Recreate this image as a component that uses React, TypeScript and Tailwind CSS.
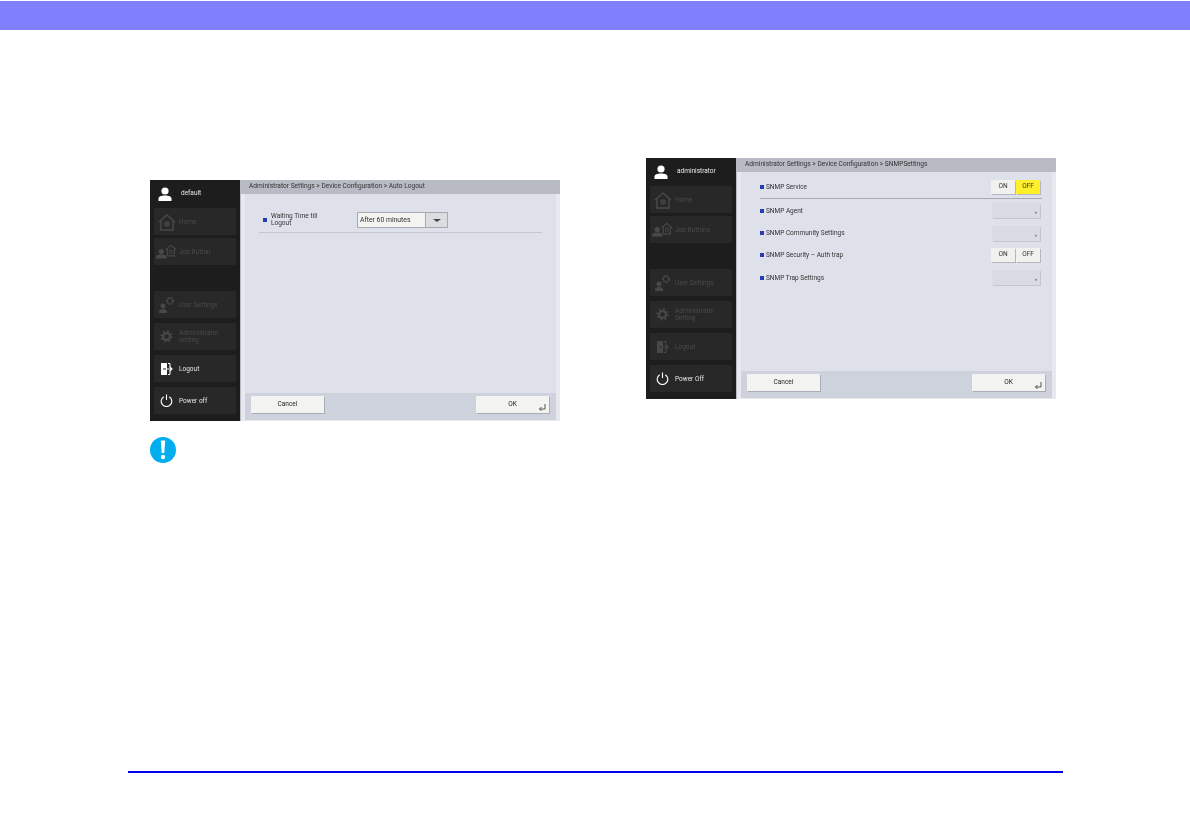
import type { ReactNode } from "react";

const FONT = "font-['Roboto','Liberation_Sans',sans-serif]";

function UserIcon() {
  return (
    <svg viewBox="0 0 16 14" className="h-[14px] w-[16px]" fill="#fff">
      <circle cx="8" cy="4" r="3.6" />
      <path d="M1.5 14v-2.6c0-1.7 2.4-3 6.5-3s6.5 1.300 6.500 3V14z" />
    </svg>
  );
}

function HomeIcon() {
  return (
    <svg viewBox="0 0 18 18" className="h-[18px] w-[18px]" fill="none" stroke="#484848" strokeWidth="1.6">
      <path d="M1 9 9 2l8 7" />
      <path d="M3 8v9h12V8" />
      <path d="M7 9h4v4H7zM7 11h4M9 9v4" strokeWidth="1" />
    </svg>
  );
}

function JobIcon() {
  return (
    <svg viewBox="0 0 24 16" className="h-[17px] w-[21px]" fill="none">
      <circle cx="6" cy="8" r="3" fill="#484848" />
      <path d="M0 16v-2c0-1.500 2.500-2.500 6-2.500s6 1 6 2.500v2z" fill="#484848" />
      <path d="M11 6l6-5 6 5M13 5.500V13h8V5.500" stroke="#484848" strokeWidth="1.300" />
      <path d="M15.500 6.500h3v3.500h-3z" stroke="#484848" />
    </svg>
  );
}

function UserGearIcon() {
  return (
    <svg viewBox="0 0 18 18" className="h-[18px] w-[18px]">
      <circle cx="12" cy="5" r="3" fill="none" stroke="#484848" strokeWidth="2" strokeDasharray="2 0.8" />
      <circle cx="5" cy="10" r="2.500" fill="#484848" />
      <path d="M1 17v-1.500c0-1.500 1.500-2.500 4-2.500s4 1 4 2.500V17z" fill="#484848" />
    </svg>
  );
}

function GearIcon() {
  return (
    <svg viewBox="0 0 14 14" className="h-[13px] w-[13px]">
      <circle cx="7" cy="7" r="3.700" fill="none" stroke="#484848" strokeWidth="2.400" />
      <circle cx="7" cy="7" r="5.800" fill="none" stroke="#484848" strokeWidth="1.800" strokeDasharray="2 2.550" />
    </svg>
  );
}

function LogoutIcon({ color }: { color: string }) {
  return (
    <svg viewBox="0 0 14 14" className="h-[14px] w-[14px]">
      <path d="M1 1h6v12H1z" fill={color} />
      <path d="M8 1.500h2V5M8 12.500h2V9" fill="none" stroke={color} />
      <path d="M5 7h6M9.500 4.800 12 7l-2.500 2.200" fill="none" stroke={color} strokeWidth="1.200" />
      <path d="M3 7h3" stroke="#282828" strokeWidth="1" />
    </svg>
  );
}

function PowerIcon() {
  return (
    <svg viewBox="0 0 14 14" className="h-[13px] w-[13px]" fill="none" stroke="#fff" strokeWidth="1.200">
      <path d="M4 3a5.700 5.700 0 1 0 6 0" />
      <path d="M7 0.500v6" />
    </svg>
  );
}

function Tile({
  icon,
  label,
  active = false,
  className = "",
}: {
  icon: ReactNode;
  label: ReactNode;
  active?: boolean;
  className?: string;
}) {
  return (
    <div className={`flex h-[27px] items-center rounded-[1px] bg-[#282828] ${className}`}>
      <span className="flex w-[25px] shrink-0 justify-center">{icon}</span>
      <span className={`pt-[1px] text-[6.500px] leading-[7px] ${active ? "text-[#e4e4e4]" : "text-[#4a4a4a]"}`}>{label}</span>
    </div>
  );
}

function Sidebar({ user, job, admin, power, logoutActive }: { user: string; job: string; admin: string; power: string; logoutActive: boolean }) {
  return (
    <div className="flex w-[90px] shrink-0 flex-col bg-[#1d1d1d] px-[4px]">
      <div className="flex h-[27px] items-center">
        <span className="ml-[3px] flex w-[24px] shrink-0"><UserIcon /></span>
        <span className="pt-[1px] text-[6.500px] text-[#e8e8e8]">{user}</span>
      </div>
      <Tile icon={<HomeIcon />} label="Home" className="mt-[1px]" />
      <Tile icon={<JobIcon />} label={job} className="mt-[3px]" />
      <Tile icon={<UserGearIcon />} label="User Settings" className="mt-[26px]" />
      <Tile icon={<GearIcon />} label={<>Administrator<br />{admin}</>} className="mt-[5px]" />
      <Tile icon={<LogoutIcon color={logoutActive ? "#fff" : "#484848"} />} label="Logout" active={logoutActive} className="mt-[5px]" />
      <Tile icon={<PowerIcon />} label={power} active className="mt-[5px]" />
    </div>
  );
}

function Bullet() {
  return <span className="h-[4px] w-[4px] shrink-0 bg-[#2a3cb4]" />;
}

function FooterButton({ children, enter = false }: { children: string; enter?: boolean }) {
  return (
    <div className="relative flex h-[17px] w-[73px] items-center justify-center bg-[#f3f3f1] text-[6.500px] text-[#222] shadow-[1px_1px_0_#a9adb8]">
      {children}
      {enter && (
        <svg viewBox="0 0 8 8" className="absolute right-[3px] bottom-[2px] h-[8px] w-[8px]" fill="none" stroke="#555" strokeWidth="1">
          <path d="M7 1v5H1.500M3.500 4 1.500 6l2 2" />
        </svg>
      )}
    </div>
  );
}

function Screen({
  title,
  sidebar,
  children,
  className = "",
}: {
  title: string;
  sidebar: ReactNode;
  children: ReactNode;
  className?: string;
}) {
  return (
    <div className={`flex h-[241px] w-[410px] shrink-0 blur-[0.3px] ${FONT} ${className}`}>
      {sidebar}
      <div className="flex min-w-0 flex-1 flex-col bg-[#b9bbc4] pl-[1px]">
        <div className="flex h-[14px] shrink-0 items-center pl-[8px] text-[6.600px] whitespace-nowrap text-[#333]">{title}</div>
        <div className="flex flex-1 flex-col border-x-[4px] border-b-[1px] border-x-[#e8e9ef] border-b-[#e8e9ef] bg-[#dfe1ea]">
          <div className="flex-1">{children}</div>
          <div className="flex h-[27px] shrink-0 items-start justify-between bg-[#cdd2dd] pt-[3px] pr-[7px] pl-[6px]">
            <FooterButton>Cancel</FooterButton>
            <FooterButton enter>OK</FooterButton>
          </div>
        </div>
      </div>
    </div>
  );
}

function Toggle({ on = false }: { on?: boolean }) {
  return (
    <div className="flex h-[14px] gap-[1px] text-[6.500px] text-[#333]">
      <span className="flex w-[24px] items-center justify-center bg-[#f1f1ef] shadow-[1px_1px_0_#b4b7c1]">ON</span>
      <span className={`flex w-[24px] items-center justify-center shadow-[1px_1px_0_#b4b7c1] ${on ? "bg-[#fff02a]" : "bg-[#f1f1ef]"}`}>OFF</span>
    </div>
  );
}

function DisabledButton() {
  return (
    <div className="relative h-[15px] w-[48px] bg-[#d9dbe2] shadow-[1px_1px_0_#c4c7d0]">
      <span className="absolute right-[2px] bottom-[3px] text-[5px] leading-none text-[#888]">▸</span>
    </div>
  );
}

function SnmpRow({ label, control, className = "" }: { label: string; control: ReactNode; className?: string }) {
  return (
    <div className={`flex h-[22px] items-center justify-between pr-[12px] pl-[19px] ${className}`}>
      <div className="flex items-center gap-[2px] text-[6.500px] text-[#333]">
        <Bullet />
        <span className="pt-[2px]">{label}</span>
      </div>
      {control}
    </div>
  );
}

export default function App() {
  return (
    <div className="h-[840px] w-[1190px] bg-white pt-[1px]">
      <div className="h-[29px] bg-[#8080ff]" />
      <div className="flex h-[741px] items-start pl-[150px]">
        <div className="mt-[150px] flex shrink-0 flex-col">
          <Screen
            title="Administrator Settings > Device Configuration > Auto Logout"
            sidebar={<Sidebar user="default" job="Job Button" admin="setting" power="Power off" logoutActive />}
          >
            <div className="mt-[19px] ml-[14px] flex h-[20px] w-[283px] items-start border-b border-[#c4c7d1] pl-[4px]">
              <div className="flex w-[95px] items-center gap-[4px]">
                <Bullet />
                <span className="text-[6.500px] leading-[7px] text-[#333]">Waiting Time till<br />Logout</span>
              </div>
              <div className="-mt-[1px] -ml-[1px] flex h-[16px] w-[91px] border border-[#a7aab4] bg-[#f3f3f1] text-[6.800px] text-[#333]">
                <span className="flex flex-1 items-center pl-[2px]">After 60 minutes</span>
                <span className="flex w-[22px] items-center justify-center border-l border-[#a7aab4] bg-[#dcdde1]">
                  <span className="h-0 w-0 border-x-[4px] border-t-[3px] border-x-transparent border-t-[#444]" />
                </span>
              </div>
            </div>
          </Screen>
          <svg viewBox="0 0 26 26" className="mt-[16px] h-[26px] w-[26px]">
            <circle cx="13" cy="13" r="13" fill="#00aeef" />
            <path d="M10.800 3.500h4.400l-.9 12.500h-2.600z" fill="#fff" />
            <circle cx="13" cy="20" r="2.200" fill="#fff" />
          </svg>
        </div>
        <Screen
          className="mt-[128px] ml-[86px]"
          title="Administrator Settings > Device Configuration > SNMPSettings"
          sidebar={<Sidebar user="administrator" job="Job Buttons" admin="Setting" power="Power Off" logoutActive={false} />}
        >
          <SnmpRow label="SNMP Service" control={<Toggle on />} className="mt-[4px]" />
          <div className="mr-[10px] ml-[19px] h-[9px] border-t border-[#a7aab4]" />
          <SnmpRow label="SNMP Agent" control={<DisabledButton />} className="-mt-[8px] h-[23px]" />
          <SnmpRow label="SNMP Community Settings" control={<DisabledButton />} />
          <SnmpRow label="SNMP Security – Auth trap" control={<Toggle />} />
          <SnmpRow label="SNMP Trap Settings" control={<DisabledButton />} className="h-[23px]" />
        </Screen>
      </div>
      <div className="mx-[128px] w-[935px] border-t-[2px] border-[#0000ee]" />
    </div>
  );
}
